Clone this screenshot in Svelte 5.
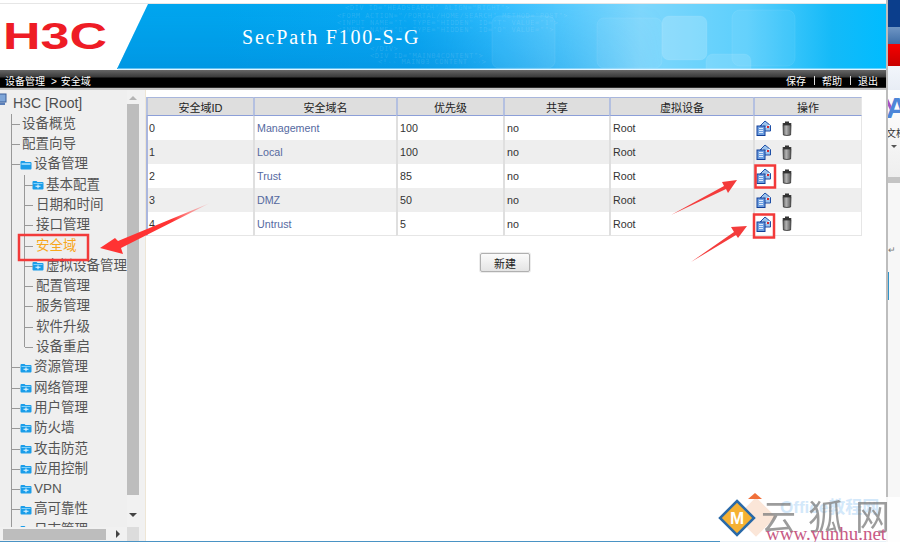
<script>
  const cols = [
    { name: '安全域ID', w: 107 },
    { name: '安全域名', w: 143 },
    { name: '优先级', w: 107 },
    { name: '共享', w: 106 },
    { name: '虚拟设备', w: 144 },
    { name: '操作', w: 109 }
  ];
  const zones = [
    { id: 0, name: 'Management', pr: 100 },
    { id: 1, name: 'Local', pr: 100 },
    { id: 2, name: 'Trust', pr: 85 },
    { id: 3, name: 'DMZ', pr: 50 },
    { id: 4, name: 'Untrust', pr: 5 }
  ];
  const sub = [
    { t: '基本配置', f: true },
    { t: '日期和时间' },
    { t: '接口管理' },
    { t: '安全域', on: true },
    { t: '虚拟设备管理', f: true },
    { t: '配置管理' },
    { t: '服务管理' },
    { t: '软件升级' },
    { t: '设备重启', last: true }
  ];
  const rest = ['资源管理', '网络管理', '用户管理', '防火墙', '攻击防范', '应用控制', 'VPN', '高可靠性', '日志管理'];
  const code = [
    { x: 345, y: 6, s: '<DIV ID="HEADSEARCH" ALIGN="RIGHT">' },
    { x: 337, y: 14, s: '<FORM ACTION="/PORTAL/HOME/SEARCH" METHOD="POST">' },
    { x: 337, y: 21, s: '<INPUT NAME="T" TYPE="HIDDEN" ID="T" VALUE="1">' },
    { x: 337, y: 28, s: '<INPUT NAME="O" TYPE="HIDDEN" ID="O" VALUE="">' },
    { x: 370, y: 47, s: '</DIV>' },
    { x: 370, y: 54, s: '<DIV ID="MAIN04CONTENT">' },
    { x: 378, y: 60, s: '<!-- MAIN03 CONTENT -->' }
  ];
</script>

{#snippet folder()}
  <svg class="folder" width="12" height="10" viewBox="0 0 12 10" aria-hidden="true">
    <path d="M0.5 2 Q0.5 1 1.5 1 H4.5 L5.5 2 H10.5 Q11.5 2 11.5 3 V8.5 Q11.5 9.5 10.5 9.5 H1.5 Q0.5 9.5 0.5 8.5 Z" fill="#1a9de9" />
    <path d="M1.5 3 H10.5 V4 H1.5 Z" fill="#7fd0fb" />
    <path d="M3.5 6.3 H8.5 M6 4.6 V8.2" stroke="#e6f6ff" stroke-width="1.1" />
  </svg>
{/snippet}

{#snippet editIcon()}
  <svg width="16" height="16" viewBox="0 0 16 16" aria-hidden="true">
    <path d="M4 6 L9 1 L14.5 5.5 V11 H8 V6 Z" fill="#9cc3ec" stroke="#1f4fa6" stroke-width="1" />
    <path d="M6 5 L9.5 7.5 L14 5" fill="none" stroke="#fff" stroke-width="1" />
    <rect x="1" y="6" width="8" height="9.5" fill="#6d9fe0" stroke="#123f98" stroke-width="1" />
    <path d="M3 8.5 H7 M3 10.5 H7 M3 12.5 H7" stroke="#dce9fb" stroke-width="1" />
    <rect x="11" y="6" width="2" height="2" fill="#d8262c" />
  </svg>
{/snippet}

{#snippet trashIcon()}
  <svg width="10" height="15" viewBox="0 0 10 15" aria-hidden="true">
    <defs>
      <linearGradient id="can" x1="0" x2="1" y1="0" y2="0">
        <stop offset="0" stop-color="#5a5a5a" />
        <stop offset="0.4" stop-color="#b4b4b4" />
        <stop offset="1" stop-color="#555" />
      </linearGradient>
    </defs>
    <rect x="3" y="0.5" width="4" height="2" fill="#333" />
    <rect x="0.5" y="2" width="9" height="2" rx="1" fill="#333" />
    <path d="M1 4 H9 L8.6 14 Q5 15 1.4 14 Z" fill="url(#can)" stroke="#333" stroke-width="0.8" />
  </svg>
{/snippet}

<div class="app">
  <div class="left">
    <div class="topline"></div>

    <header class="banner">
      <svg width="886" height="66" viewBox="0 0 886 66">
        <defs>
          <linearGradient id="sky" x1="0" x2="1" y1="0" y2="0">
            <stop offset="0.13" stop-color="#00a6ef" />
            <stop offset="0.38" stop-color="#0baaf5" />
            <stop offset="0.5" stop-color="#35bfff" />
            <stop offset="0.68" stop-color="#7fd7fc" />
            <stop offset="0.82" stop-color="#5ccffc" />
            <stop offset="0.93" stop-color="#14baf8" />
            <stop offset="1" stop-color="#00bcff" />
          </linearGradient>
          <linearGradient id="shade" x1="0" x2="0" y1="0" y2="1">
            <stop offset="0" stop-color="#0090dd" stop-opacity="0" />
            <stop offset="1" stop-color="#0088d8" stop-opacity="0.5" />
          </linearGradient>
          <linearGradient id="fade" x1="0" x2="1" y1="0" y2="0">
            <stop offset="0.5" stop-color="#fff" stop-opacity="1" />
            <stop offset="0.75" stop-color="#fff" stop-opacity="0" />
          </linearGradient>
          <mask id="m"><rect width="886" height="66" fill="url(#fade)" /></mask>
          <clipPath id="sq"><rect width="886" height="65" /></clipPath>
        </defs>
        <rect width="886" height="66" fill="#fff" />
        <polygon points="148,0 886,0 886,65 117,65" fill="url(#sky)" />
        <polygon points="148,0 886,0 886,65 117,65" fill="url(#shade)" mask="url(#m)" />
        <g fill="#fff" fill-opacity="0.05" stroke="#fff" stroke-opacity="0.07" clip-path="url(#sq)">
          <rect x="492" y="12" width="63" height="52" rx="7" />
          <rect x="597" y="14" width="65" height="50" rx="7" />
          <rect x="662" y="12" width="45" height="44" rx="7" fill-opacity="0.18" />
          <rect x="706" y="50" width="45" height="25" rx="7" fill-opacity="0.12" />
          <rect x="732" y="6" width="63" height="56" rx="8" />
        </g>
        <g class="code" fill="#fff" fill-opacity="0.13">
          {#each code as line}
            <text x={line.x} y={line.y}>{line.s}</text>
          {/each}
        </g>
        <rect x="118" y="64.5" width="768" height="1" fill="#bfeaff" />
        <text class="logo" x="3" y="45" textLength="104" lengthAdjust="spacingAndGlyphs">H3C</text>
        <text class="product" x="242" y="40">SecPath F100-S-G</text>
      </svg>
    </header>

    <nav class="crumb">
      <span>设备管理<span class="sep">&gt;</span>安全域</span>
      <span class="actions"><span>保存</span><i></i><span>帮助</span><i></i><span>退出</span></span>
    </nav>

    <div class="body">
      <aside class="side">
        <div class="tree">
          <div class="root">
            <svg class="rooticon" width="8" height="13" viewBox="0 0 8 13" aria-hidden="true">
              <rect x="-4" y="1" width="10" height="8" fill="#7fa6d8" stroke="#3c5f99" />
              <rect x="-3" y="9.5" width="8" height="2.5" fill="#5b7fb8" />
            </svg>
            H3C [Root]
          </div>
          <ul class="l1">
            <li><div class="row">设备概览</div></li>
            <li><div class="row">配置向导</div></li>
            <li>
              <div class="row icon"><svg class="folder" width="12" height="10" viewBox="0 0 12 10" aria-hidden="true"><path d="M0.5 2 Q0.5 1 1.5 1 H4.5 L5.5 2 H10.5 Q11.5 2 11.5 3 V8.5 Q11.5 9.5 10.5 9.5 H1.5 Q0.5 9.5 0.5 8.5 Z" fill="#1a9de9" /><path d="M1.5 3 H10.5 V5 H1.5 Z" fill="#8bd4fb" /></svg>设备管理</div>
              <ul class="l2">
                {#each sub as s}
                  <li class:last={s.last}>
                    <div class="row" class:icon={s.f} class:on={s.on}>
                      {#if s.f}{@render folder()}{/if}{s.t}
                    </div>
                  </li>
                {/each}
              </ul>
            </li>
            {#each rest as r}
              <li><div class="row icon">{@render folder()}{r}</div></li>
            {/each}
          </ul>
        </div>
        <div class="vbar">
          <span class="up"></span>
          <span class="thumb"></span>
          <span class="down"></span>
        </div>
        <div class="hbar">
          <span class="hthumb"></span>
          <span class="right"></span>
        </div>
        <div class="corner"></div>
      </aside>

      <main class="main">
        <table>
          <colgroup>
            {#each cols as c}<col style="width:{c.w}px" />{/each}
          </colgroup>
          <thead>
            <tr>{#each cols as c}<th>{c.name}</th>{/each}</tr>
          </thead>
          <tbody>
            {#each zones as z}
              <tr>
                <td>{z.id}</td>
                <td class="link">{z.name}</td>
                <td>{z.pr}</td>
                <td>no</td>
                <td>Root</td>
                <td class="ops"><span class="ops-in">{@render editIcon()}{@render trashIcon()}</span></td>
              </tr>
            {/each}
          </tbody>
        </table>
        <div class="actions-row"><button>新建</button></div>
      </main>
    </div>
  </div>

  <div class="strip">
    <div class="s1"></div>
    <div class="s2"></div>
    <div class="s3"></div>
    <div class="s4"></div>
    <div class="s5">
      <span class="slash"></span>
      <span class="bigA">A</span>
      <span class="wen">文档</span>
      <span class="tri"></span>
    </div>
    <div class="s6"></div>
    <div class="s7"><span class="ret">↵</span><span class="blue"></span></div>
  </div>

  <svg class="marks" width="900" height="542" viewBox="0 0 900 542" aria-hidden="true">
    <defs>
      <linearGradient id="a1" gradientUnits="userSpaceOnUse" x1="210" y1="203" x2="100" y2="249">
        <stop offset="0" stop-color="#f44" stop-opacity="0.1" />
        <stop offset="0.35" stop-color="#f33" />
      </linearGradient>
    </defs>
    <g fill="none" stroke="#f23a3a" stroke-width="2.5">
      <rect x="19" y="235" width="69" height="25" />
      <rect x="755.5" y="165.5" width="19.5" height="22" />
      <rect x="754" y="214.5" width="20" height="23" />
    </g>
    <g fill="#f43c3c">
      <polygon points="210,203 118,241 115,238 100,248 123,254 121,248" fill="url(#a1)" />
      <polygon points="671,215 724,186 722,182 737,180 728,193 726,189" />
      <polygon points="691,262 734,232 731,227 747,226 738,238 736,235" />
    </g>
  </svg>

  <div class="watermark">
    <span class="ghostbox"></span>
    <span class="tip"></span>
    <svg class="wm-logo" width="38" height="38" viewBox="0 0 38 38" aria-hidden="true">
      <polygon points="19,2 36,19 19,36 2,19" fill="#f5b133" stroke="#2a6aa8" stroke-width="2.5" />
      <text x="19" y="25" text-anchor="middle" class="wm-m">M</text>
    </svg>
    <span class="wm-ghost">Office教程网</span>
    <span class="wm-cn">云狐网</span>
    <span class="wm-url">www.yunhu.net</span>
  </div>
</div>

<style>
  :global(body) { margin: 0; background: #fff; }
  .app {
    position: relative;
    width: 900px;
    height: 542px;
    display: flex;
    overflow: hidden;
    font-family: "Liberation Sans", "Noto Sans CJK SC", sans-serif;
  }
  .left {
    width: 886px;
    display: flex;
    flex-direction: column;
  }
  .topline { height: 4px; flex: none; background: #fff; border-bottom: 1px solid #e6e6e6; box-sizing: border-box; }
  .banner { height: 66px; flex: none; }
  .banner svg { display: block; }
  .code { font: 7px "DejaVu Sans Mono", monospace; letter-spacing: 0.5px; }
  .logo { font: bold 36px "Liberation Sans", sans-serif; fill: #ee1c25; }
  .product { font: 20px "Liberation Serif", serif; letter-spacing: 1.8px; fill: #fff; }

  .crumb {
    height: 18px;
    flex: none;
    box-sizing: border-box;
    padding: 3px 8px 0 5px;
    display: flex;
    justify-content: space-between;
    align-items: center;
    color: #fff;
    font-size: 10px;
    background: linear-gradient(#666 0, #3a3a3a 7px, #000 8px, #000 17px, #555 18px);
  }
  .sep { margin: 0 4px 0 6px; }
  .actions { display: flex; align-items: center; gap: 7.5px; font-size: 10px; }
  .actions i { width: 1px; height: 9px; background: #ddd; }

  .body { flex: 1; min-height: 0; display: flex; border-top: 2px solid #c4c4c4; border-bottom: 1px solid #4a93c4; }

  .side {
    width: 139px;
    flex: none;
    display: grid;
    grid-template-columns: 127px 12px;
    grid-template-rows: 1fr 14px;
    background: #efefef;
    min-height: 0;
  }
  .tree { overflow: hidden; min-height: 0; padding-top: 3.5px; font-size: 13.5px; color: #555; }
  .root { height: 20.3px; line-height: 19px; padding-left: 13px; font-size: 14px; color: #4d4d4d; position: relative; white-space: nowrap; }
  .rooticon { position: absolute; left: 0; top: -1px; }
  ul { list-style: none; margin: 0; padding: 0; }
  .l1 { margin-left: 11px; border-left: 1px solid #999; }
  .l1 > li { position: relative; }
  .row { height: 20.3px; line-height: 20.3px; white-space: nowrap; position: relative; }
  .l1 > li > .row { padding-left: 10px; }
  .l1 > li > .row::before, .l2 > li > .row::before {
    content: "";
    position: absolute;
    left: 0;
    top: 10px;
    width: 8px;
    height: 1px;
    background: #999;
  }
  .l1 > li > .row.icon { padding-left: 8px; display: flex; align-items: center; gap: 2px; }
  .folder { flex: none; }
  .l2 { margin-left: 12px; }
  .l2 > li { border-left: 1px solid #999; position: relative; }
  .l2 > li.last { border-left-color: transparent; }
  .l2 > li.last::after {
    content: "";
    position: absolute;
    left: -1px;
    top: 0;
    width: 1px;
    height: 10px;
    background: #999;
  }
  .l2 > li > .row { padding-left: 11px; }
  .l2 > li > .row.icon { padding-left: 7px; display: flex; align-items: center; gap: 2px; }
  .row.on { color: #f7a71c; }

  .vbar { position: relative; background: #f1f1f1; display: flex; flex-direction: column; align-items: center; }
  .up { height: 0; width: 0; margin: 6px 0 4px; border: 4px solid transparent; border-top: 0; border-bottom: 4px solid #b5b5b5; }
  .thumb { width: 12px; height: 391px; background: #bdbdbd; }
  .down { height: 0; width: 0; margin-top: 18px; border: 4px solid transparent; border-bottom: 0; border-top: 4px solid #444; }
  .hbar { background: #f1f1f1; display: flex; align-items: center; padding-left: 3px; gap: 10px; }
  .hthumb { width: 103px; height: 11px; background: #bdbdbd; }
  .right { width: 0; height: 0; border: 4px solid transparent; border-right: 0; border-left: 4px solid #444; }
  .corner { background: #dcdcdc; }

  .main {
    flex: 1;
    min-width: 0;
    background: #fff;
    border-left: 1px solid #eee6d6;
    margin-left: 6px;
    padding-top: 7px;
    box-shadow: -6px 0 0 #f1f1f1;
  }
  table {
    border-collapse: separate;
    border-spacing: 0;
    table-layout: fixed;
    width: 716px;
    font-size: 10.7px;
    color: #333;
  }
  th {
    height: 17px;
    padding: 0;
    font-weight: normal;
    font-size: 11px;
    color: #222;
    background: #dedede;
    border-top: 1px solid #a8b6dc;
    border-bottom: 1px solid #8c9fd8;
    border-left: 2px solid #b4c0e0;
    text-align: center;
  }
  td {
    height: 24px;
    box-sizing: border-box;
    padding: 0 0 0 2px;
    border-left: 2px solid #dfdfdf;
  }
  td:first-child { border-left-color: #aab6de; padding-left: 1px; }
  tbody tr:nth-child(even) td { background: #eee; }
  tbody tr:last-child td { border-bottom: 1px solid #e6e6e6; }
  td:last-child, th:last-child { border-right: 1px solid #e6e6e6; }
  .link { color: #55699f; }
  .ops-in { display: flex; align-items: center; gap: 10px; margin-left: -1px; }
  .actions-row { width: 718px; display: flex; justify-content: center; padding-top: 17px; }
  button {
    width: 50px;
    height: 19px;
    padding: 0;
    font: 11px "Noto Sans CJK SC", sans-serif;
    color: #222;
    background: linear-gradient(#fbfbfb, #e4e4e4);
    border: 1px solid #b0b0b0;
    border-radius: 2px;
    box-shadow: 0 0 0 1px #ececec;
  }

  .strip { width: 14px; flex: none; display: flex; flex-direction: column; border-left: 2px solid #bdbdbd; box-sizing: border-box; overflow: hidden; }
  .s1 { height: 27px; background: #0b3e8c; flex: none; }
  .s2 { height: 17px; background: linear-gradient(#6f95c4, #3e6ea6); flex: none; }
  .s3 { height: 22px; background: linear-gradient(#f60000, #c80000); flex: none; }
  .s4 { height: 24px; background: linear-gradient(#f2f6fc, #e8edf5); flex: none; }
  .s5 { height: 87px; flex: none; position: relative; background: linear-gradient(#fff, #eeeeee); }
  .slash { position: absolute; left: 0; top: 8px; width: 3px; height: 15px; background: #a84fc4; transform: rotate(-25deg); }
  .bigA { position: absolute; left: -2px; top: 3px; font: bold 30px "Liberation Sans", sans-serif; color: #4d86d8; line-height: 30px; }
  .wen { position: absolute; left: -2px; top: 35px; font-size: 10px; white-space: nowrap; color: #333; }
  .tri { position: absolute; left: 3px; top: 55px; border: 3px solid transparent; border-bottom: 0; border-top: 3px solid #555; }
  .s6 { height: 6px; flex: none; background: #c4c4c4; }
  .s7 { flex: 1; background: #f7f7f7; position: relative; }
  .ret { position: absolute; left: 0; top: 62px; font-size: 9px; color: #777; }
  .blue { position: absolute; left: 0; top: 89px; width: 1px; height: 28px; background: #2f93c8; }

  .marks { position: absolute; left: 0; top: 0; pointer-events: none; }

  .watermark { position: absolute; left: 720px; top: 497px; width: 180px; height: 45px; background: rgba(255,255,255,0.88); }
  .ghostbox { position: absolute; left: 22px; top: 6px; width: 28px; height: 28px; background: #fbe6d8; transform: rotate(45deg); }
  .tip { position: absolute; left: 28px; top: -4px; border: 7px solid transparent; border-top: 0; border-bottom: 6px solid #f0703a; }
  .wm-logo { position: absolute; left: -2px; top: 2px; }
  .wm-m { font: bold 17px "Liberation Sans", sans-serif; fill: #fff; }
  .wm-ghost { position: absolute; left: 60px; top: -4px; font-size: 17px; font-weight: bold; color: #d3e8fa; white-space: nowrap; }
  .wm-cn { position: absolute; left: 41px; top: 3px; font-size: 35px; line-height: 36px; letter-spacing: 12px; color: #7c7c7c; opacity: 0.75; white-space: nowrap; }
  .wm-url { position: absolute; left: 46px; top: 26px; font: 19px "Liberation Serif", serif; color: #c85a85; white-space: nowrap; }
</style>
